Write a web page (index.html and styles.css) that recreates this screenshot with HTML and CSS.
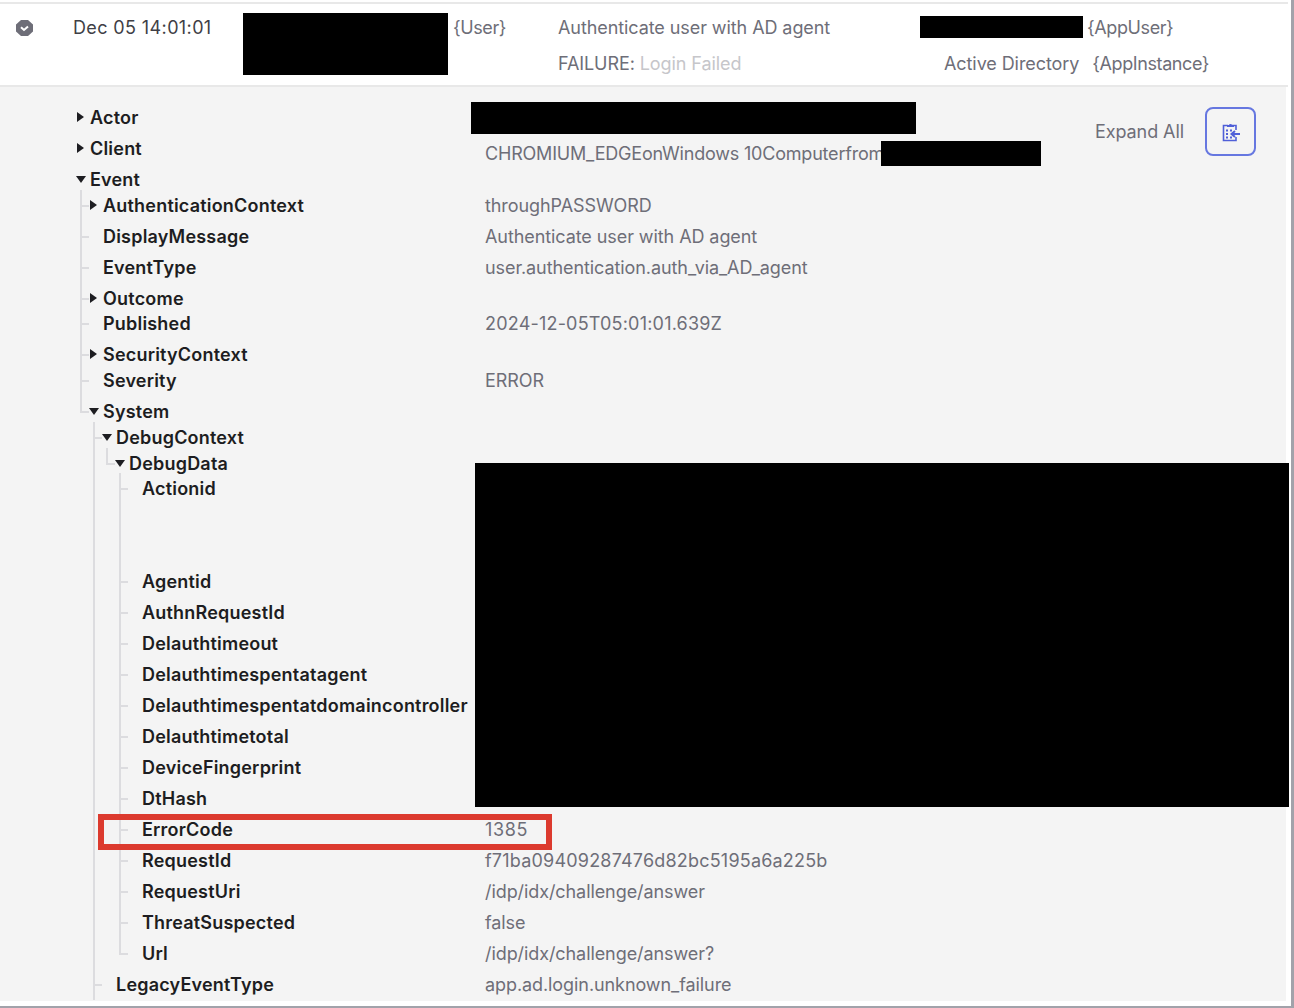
FILE: index.html
```html
<!DOCTYPE html>
<html lang="en">
<head>
<meta charset="utf-8">
<title>Log event detail</title>
<link rel="stylesheet" href="styles.css">
</head>
<body>
<div class="frame">
  <header class="summary">
    <div class="status">
      <svg class="status-icon" viewBox="0 0 17 16" width="17" height="16" aria-hidden="true">
        <path d="M5 0h7l5 4.6v6.8L12 16H5l-5-4.6V4.600z" fill="#6e6e78"/>
        <path d="M5 7.200l3 2.800 4-3.600" fill="none" stroke="#fff" stroke-width="2"/>
      </svg>
    </div>
    <div class="col-date"><div class="line date">Dec 05 14:01:01</div></div>
    <div class="col-actor"><div class="line type">{User}</div></div>
    <div class="col-event">
      <div class="line">Authenticate user with AD agent</div>
      <div class="line">FAILURE: <span class="reason">Login Failed</span></div>
    </div>
    <div class="col-target">
      <div class="line target-user type">{AppUser}</div>
      <div class="line target-app">Active Directory&nbsp; <span class="type app-type">{AppInstance}</span></div>
    </div>
  </header>

  <main class="detail">
    <div class="tools">
      <span class="expand">Expand All</span>
      <button class="copy" type="button" aria-label="Copy">
        <svg viewBox="0 0 18 20" width="18" height="20" aria-hidden="true">
          <path d="M6 3.500H1.500v15h12.500V15M14 8V3.500H10" fill="none" stroke="#4f5fd8" stroke-width="1.600"/>
          <path d="M5 5V3h1.800a2 2 0 0 1 3.400 0H12v2z" fill="#4f5fd8"/>
          <path d="M4 7.500h2v2H4zM8 7.500h2v2H8zM4 11h2v2H4zM4 14.500h2v2H4zM8 14.500h2v2H8z" fill="#4f5fd8"/>
          <path d="M18 12H10M13 9l-3.500 3L13 15" fill="none" stroke="#4f5fd8" stroke-width="2"/>
        </svg>
      </button>
    </div>

    <ul class="tree root">
      <li><div class="row"><i class="tw closed"></i><span class="key">Actor</span></div></li>
      <li><div class="row"><i class="tw closed"></i><span class="key">Client</span><span class="val val-low">CHROMIUM_EDGEonWindows 10Computerfrom</span></div></li>
      <li><div class="row short"><i class="tw open"></i><span class="key">Event</span></div>
        <ul class="tree d1">
          <li><div class="row"><i class="tw closed"></i><span class="key">AuthenticationContext</span><span class="val">throughPASSWORD</span></div></li>
          <li><div class="row"><i class="tw"></i><span class="key">DisplayMessage</span><span class="val">Authenticate user with AD agent</span></div></li>
          <li><div class="row"><i class="tw"></i><span class="key">EventType</span><span class="val">user.authentication.auth_via_AD_agent</span></div></li>
          <li><div class="row tight"><i class="tw closed"></i><span class="key">Outcome</span></div></li>
          <li><div class="row"><i class="tw"></i><span class="key">Published</span><span class="val num">2024-12-05T05:01:01.639Z</span></div></li>
          <li><div class="row short"><i class="tw closed"></i><span class="key">SecurityContext</span></div></li>
          <li><div class="row"><i class="tw"></i><span class="key">Severity</span><span class="val">ERROR</span></div></li>
          <li class="last"><div class="row short"><i class="tw open"></i><span class="key">System</span></div>
            <ul class="tree d2">
              <li><div class="row short"><i class="tw open"></i><span class="key">DebugContext</span></div>
                <ul class="tree d3">
                  <li class="last"><div class="row tight"><i class="tw open"></i><span class="key">DebugData</span></div>
                    <ul class="tree d4">
                      <li><div class="row tall"><i class="tw"></i><span class="key">Actionid</span></div></li>
                      <li><div class="row"><i class="tw"></i><span class="key">Agentid</span></div></li>
                      <li><div class="row"><i class="tw"></i><span class="key">AuthnRequestId</span></div></li>
                      <li><div class="row"><i class="tw"></i><span class="key">Delauthtimeout</span></div></li>
                      <li><div class="row"><i class="tw"></i><span class="key">Delauthtimespentatagent</span></div></li>
                      <li><div class="row"><i class="tw"></i><span class="key">Delauthtimespentatdomaincontroller</span></div></li>
                      <li><div class="row"><i class="tw"></i><span class="key">Delauthtimetotal</span></div></li>
                      <li><div class="row"><i class="tw"></i><span class="key">DeviceFingerprint</span></div></li>
                      <li><div class="row"><i class="tw"></i><span class="key">DtHash</span></div></li>
                      <li><div class="row"><i class="tw"></i><span class="key">ErrorCode</span><span class="val code">1385</span></div></li>
                      <li><div class="row"><i class="tw"></i><span class="key">RequestId</span><span class="val num">f71ba09409287476d82bc5195a6a225b</span></div></li>
                      <li><div class="row"><i class="tw"></i><span class="key">RequestUri</span><span class="val">/idp/idx/challenge/answer</span></div></li>
                      <li><div class="row"><i class="tw"></i><span class="key">ThreatSuspected</span><span class="val">false</span></div></li>
                      <li class="last"><div class="row"><i class="tw"></i><span class="key">Url</span><span class="val">/idp/idx/challenge/answer?</span></div></li>
                    </ul>
                  </li>
                </ul>
              </li>
              <li><div class="row"><i class="tw"></i><span class="key">LegacyEventType</span><span class="val">app.ad.login.unknown_failure</span></div></li>
            </ul>
          </li>
        </ul>
      </li>
    </ul>
  </main>

  <div class="redact r-actor"></div>
  <div class="redact r-target"></div>
  <div class="redact r-actor-val"></div>
  <div class="redact r-client"></div>
  <div class="redact r-debug"></div>
  <div class="callout"></div>
</div>
</body>
</html>
```
FILE: styles.css
```css
* { box-sizing: border-box; }
html, body { margin: 0; padding: 0; background: #fff; }
.frame {
  position: relative;
  width: 1294px;
  height: 1008px;
  overflow: hidden;
  padding: 2px 3px 5px 0;
  display: flex;
  flex-direction: column;
  font-family: Inter, "Liberation Sans", sans-serif;
  font-size: 18px;
  letter-spacing: -0.08px;
  color: #6e6e78;
  background: #fff;
  border-right: 3px solid #a2a2aa;
  border-bottom: 2px solid #a2a2aa;
}
.summary {
  display: flex;
  height: 85px;
  flex: none;
  background: #fff;
  border-top: 2px solid #e8e8e8;
  border-bottom: 2px solid #e8e8e8;
  padding-top: 6px;
}
.line { height: 36px; line-height: 36px; white-space: nowrap; }
.status { width: 73px; padding: 10px 0 0 16px; }
.status-icon { display: block; }
.col-date { width: 380px; }
.date { color: #3f3f46; letter-spacing: 0.38px; }
.col-actor { width: 105px; }
.col-event { width: 362px; }
.col-target { flex: 1; }
.target-user { padding-left: 167px; }
.target-app { padding-left: 24px; }
.type { letter-spacing: -0.4px; }
.app-type { margin-left: 3px; }
.reason { color: #c6c6ca; }

.detail {
  position: relative;
  flex: 1;
  min-height: 0;
  overflow: hidden;
  background: #f4f4f4;
  margin-right: 2px;
  padding: 15px 0 0 67px;
}
.tools {
  position: absolute;
  top: 20px;
  right: 30px;
  display: flex;
  align-items: center;
  gap: 21px;
}
.expand { color: #6e6e78; }
.copy {
  width: 51px;
  height: 49px;
  padding: 0;
  background: #f4f4f4;
  border: 2px solid #6677e0;
  border-radius: 8px;
  display: flex;
  align-items: center;
  justify-content: center;
}
.tree { list-style: none; margin: 0; padding: 0 0 0 13px; --key: 382px; }
.root { padding: 0; --key: 395px; }
.d2 { --key: 369px; }
.d3 { --key: 356px; }
.d4 { --key: 343px; }
.tree li { position: relative; }
.tree:not(.root) > li::before {
  content: "";
  position: absolute;
  left: 0;
  top: 0;
  bottom: 0;
  width: 2px;
  background: #dcdcdf;
}
.tree:not(.root) > li.last::before { bottom: auto; height: 16px; }
.tree:not(.root) > li::after {
  content: "";
  position: absolute;
  left: 0;
  top: 15px;
  width: 9px;
  height: 2px;
  background: #dcdcdf;
}
.row {
  display: flex;
  height: 31px;
  line-height: 31px;
  padding-left: 10px;
  white-space: nowrap;
}
.short { height: 26px; }
.tight { height: 25px; }
.tall { height: 93px; }
.tw { display: block; flex: none; width: 13px; position: relative; }
.tw.closed::before {
  content: "";
  position: absolute;
  left: 0;
  top: 10px;
  border-left: 7px solid #1d1d21;
  border-top: 5px solid transparent;
  border-bottom: 5px solid transparent;
}
.tw.open::before {
  content: "";
  position: absolute;
  left: -1px;
  top: 12px;
  border-top: 7px solid #1d1d21;
  border-left: 5px solid transparent;
  border-right: 5px solid transparent;
}
.key { flex: none; width: var(--key); color: #1d1d21; font-weight: 600; letter-spacing: 0.2px; }
.val { color: #6e6e78; }
.val-low { padding-top: 5px; letter-spacing: -0.2px; }
.num { letter-spacing: 0.2px; }
.code { letter-spacing: 0.6px; }

.redact { position: absolute; background: #000; }
.r-actor { left: 243px; top: 13px; width: 205px; height: 62px; }
.r-target { left: 920px; top: 16px; width: 163px; height: 22px; }
.r-actor-val { left: 471px; top: 102px; width: 445px; height: 32px; }
.r-client { left: 881px; top: 141px; width: 160px; height: 25px; }
.r-debug { left: 475px; top: 463px; width: 814px; height: 344px; }
.callout {
  position: absolute;
  left: 98px;
  top: 814px;
  width: 454px;
  height: 36px;
  border: 6px solid #dc3a2e;
}
```
